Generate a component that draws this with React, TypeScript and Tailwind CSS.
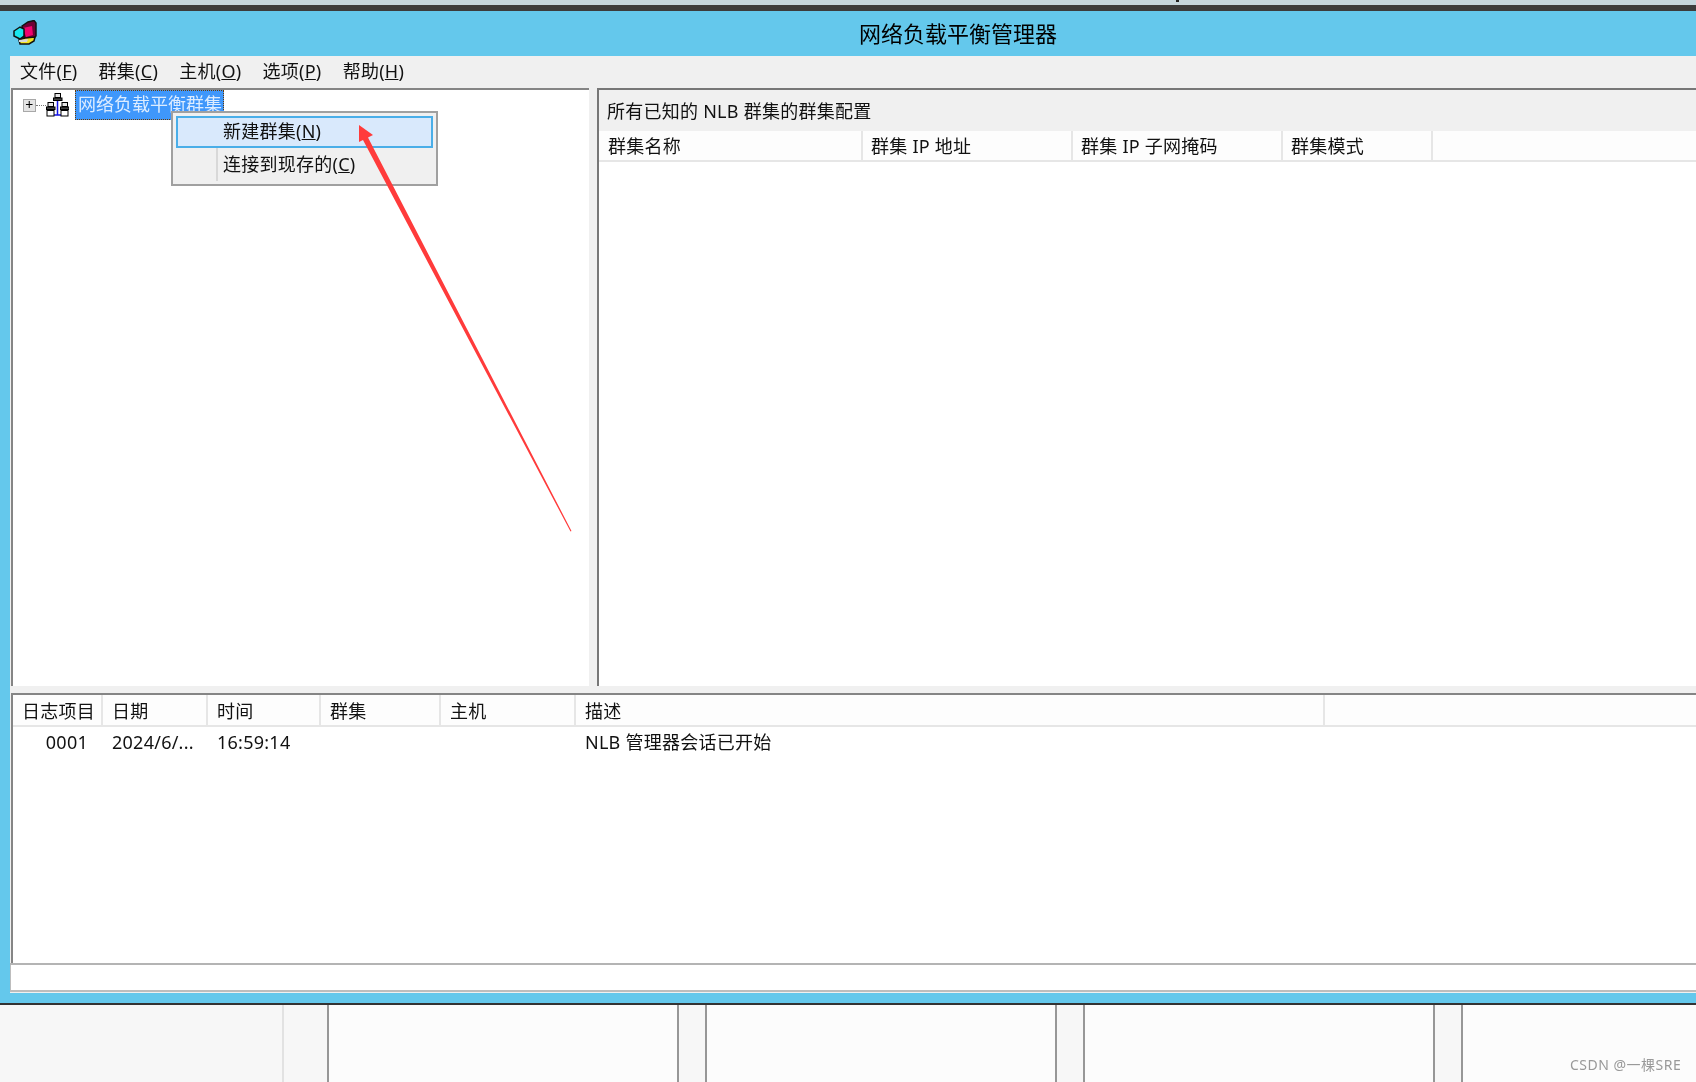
import React from 'react';

const clusterColumns = [
  { label: '群集名称', width: 'w-[264px]' },
  { label: '群集 IP 地址', width: 'w-[210px]' },
  { label: '群集 IP 子网掩码', width: 'w-[210px]' },
  { label: '群集模式', width: 'w-[150px]' },
];

const logColumns = [
  { label: '日志项目', width: 'w-[90px]' },
  { label: '日期', width: 'w-[105px]' },
  { label: '时间', width: 'w-[113px]' },
  { label: '群集', width: 'w-[120px]' },
  { label: '主机', width: 'w-[135px]' },
  { label: '描述', width: 'w-[749px]' },
];

const menus = [
  ['文件', 'F'],
  ['群集', 'C'],
  ['主机', 'O'],
  ['选项', 'P'],
  ['帮助', 'H'],
];

const taskSlots = [
  { width: 'w-[284px]', bg: 'bg-[#f7f7f7]', border: 'border-r-2 border-[#e2e2e2]' },
  { width: 'w-[45px]', bg: 'bg-[#f7f7f7]', border: 'border-r-2 border-[#979797]' },
  { width: 'w-[350px]', bg: 'bg-[#fcfcfc]', border: 'border-r-2 border-[#979797]' },
  { width: 'w-[28px]', bg: 'bg-[#f7f7f7]', border: 'border-r-2 border-[#979797]' },
  { width: 'w-[350px]', bg: 'bg-[#fcfcfc]', border: 'border-r-2 border-[#979797]' },
  { width: 'w-[28px]', bg: 'bg-[#f7f7f7]', border: 'border-r-2 border-[#979797]' },
  { width: 'w-[350px]', bg: 'bg-[#fcfcfc]', border: 'border-r-2 border-[#979797]' },
  { width: 'w-[28px]', bg: 'bg-[#f7f7f7]', border: 'border-r-2 border-[#979797]' },
  { width: 'flex-1', bg: 'bg-[#fcfcfc]', border: '' },
];

function AppIcon() {
  return (
    <svg width="24" height="25" viewBox="0 0 24 25" className="shrink-0">
      <path d="M9 6 L15 2 L21 0.5 L23 3 L23 16 L19 20 L11 18 Z" fill="#6e0034" stroke="#111" strokeWidth="1.5" />
      <path d="M10 8 L19 6 L20 15 L13 17 Z" fill="#f0046e" />
      <path d="M1 11 L7 7 L11 9 L11 16 L7 19 L1 16 Z" fill="#19e6ee" stroke="#111" strokeWidth="1.5" />
      <path d="M6 20 L12 18 L22 17 L21 21 L16 24 L7 24 Z" fill="#f2e224" stroke="#111" strokeWidth="1.5" />
      <path d="M6 20 L15 19 L14 22 L6 22 Z" fill="#d8d8d8" />
    </svg>
  );
}

function Computer({ x, y }: { x: number; y: number }) {
  return (
    <g transform={`translate(${x} ${y})`}>
      <rect x="2" y="0.5" width="5.5" height="4" fill="#e8e8e8" stroke="#000" />
      <rect x="0.5" y="5" width="8.5" height="2.5" fill="#444" stroke="#000" />
    </g>
  );
}

function NetworkIcon() {
  return (
    <svg width="23" height="24" viewBox="0 0 23 24" className="shrink-0">
      <path d="M11.5 8 V22 M7 22 H16" stroke="#1414e6" strokeWidth="1.5" fill="none" />
      <Computer x={7} y={0} />
      <Computer x={0} y={9} />
      <rect x="1" y="17.5" width="7" height="5.5" fill="#fff" stroke="#000" />
      <Computer x={14} y={9} />
      <rect x="15" y="17.5" width="7" height="5.5" fill="#fff" stroke="#000" />
    </svg>
  );
}

export default function App() {
  return (
    <div
      className="relative w-[1696px] h-[1082px] overflow-hidden flex flex-col bg-white text-[18px] tracking-[0.25px] text-[#111] blur-[0.4px]"
      style={{ fontFamily: '"Noto Sans", "Noto Sans CJK SC", sans-serif' }}
    >
      <div className="h-[5px] bg-[#c5d6dd] shrink-0" />
      <div className="h-[6px] bg-[#3c3c3c] shrink-0" />

      <div className="flex-1 flex flex-col bg-[#64c8ec] min-h-0">
        <div className="h-[45px] shrink-0 flex items-center pl-[13px] pb-[2px]">
          <AppIcon />
          <span className="ml-[822px] text-[22px] leading-none tracking-normal text-black whitespace-nowrap">网络负载平衡管理器</span>
        </div>

        <div className="ml-[10px] flex-1 flex flex-col min-h-0 bg-[#f0f0f0]">
          <div className="h-[32px] shrink-0 flex items-center pl-[10px] pb-[2px] gap-[21.2px] whitespace-nowrap">
            {menus.map(([name, key]) => (
              <span key={key}>
                {name}(<span className="underline">{key}</span>)
              </span>
            ))}
          </div>

          <div className="h-[598px] shrink-0 flex">
            <div className="w-[578px] ml-[1px] border-l-2 border-t-2 border-[#858585] bg-white">
              <div className="flex items-center h-[30px]">
                <span className="ml-[10px] w-[13px] h-[13px] border border-[#a8a8a8] bg-[#e4e4e4] flex items-center justify-center text-[14px] leading-none text-black">+</span>
                <span className="w-[10px] border-t border-dotted border-[#777]" />
                <NetworkIcon />
                <span className="ml-[6px] w-[149px] h-[30px] flex items-center pl-[2px] pb-[2px] tracking-normal bg-[#3f97fb] border border-dotted border-[#6b3a00] text-[#dcecff] whitespace-nowrap">
                  网络负载平衡群集
                </span>
              </div>
            </div>
            <div className="w-[8px]" />
            <div className="flex-1 flex flex-col border-l-2 border-t-2 border-[#777] bg-white">
              <div className="h-[41px] shrink-0 bg-[#f0f0f0] flex items-center pl-[8px] pt-[2px] whitespace-nowrap">所有已知的 NLB 群集的群集配置</div>
              <div className="h-[31px] shrink-0 flex bg-[#fdfdfd] border-b-2 border-[#e6e6e6]">
                {clusterColumns.map((col, index) => (
                  <div key={col.label} className={`${col.width} ${index === 0 ? 'pl-[9px]' : 'pl-[8px]'} pt-[2px] flex items-center border-r-2 border-[#e6e6e6] whitespace-nowrap`}>
                    {col.label}
                  </div>
                ))}
              </div>
            </div>
          </div>

          <div className="h-[7px] shrink-0" />

          <div className="h-[270px] shrink-0 ml-[1px] flex flex-col border-l-2 border-t-2 border-[#858585] bg-white">
            <div className="h-[32px] shrink-0 flex bg-[#fdfdfd] border-b-2 border-[#e6e6e6]">
              {logColumns.map((col) => (
                <div key={col.label} className={`${col.width} pl-[9px] pt-[2px] flex items-center border-r-2 border-[#e6e6e6] whitespace-nowrap`}>
                  {col.label}
                </div>
              ))}
            </div>
            <div className="flex h-[30px] items-center whitespace-nowrap">
              <div className="w-[75px] text-right">0001</div>
              <div className="w-[24px]" />
              <div className="w-[105px]">2024/6/...</div>
              <div className="w-[368px]">16:59:14</div>
              <div>NLB 管理器会话已开始</div>
            </div>
          </div>

          <div className="h-[2px] shrink-0 bg-[#b4b4b4]" />
          <div className="h-[27px] shrink-0 bg-white border-l border-b-2 border-[#bdbdbd]" />
        </div>

        <div className="h-[10px] shrink-0" />
      </div>

      <div className="h-[2px] bg-[#333] shrink-0" />
      <div className="h-[77px] shrink-0 flex">
        {taskSlots.map((slot, index) => (
          <div key={index} className={`${slot.width} ${slot.bg} ${slot.border}`} />
        ))}
      </div>

      {/* context menu over the tree */}
      <div className="absolute left-[171px] top-[111px] w-[267px] h-[75px] border-2 border-[#a0a0a0] bg-[#f0f0f0] p-[3px] flex flex-col">
        <div className="h-[32px] shrink-0 bg-[#d9e9fc] border-2 border-[#4aaee8] flex items-center pl-[45px] pb-[2px] whitespace-nowrap">
          新建群集(<span className="underline">N</span>)
        </div>
        <div className="flex-1 flex items-center">
          <div className="ml-[40px] w-[2px] self-stretch bg-[#d8d8d8]" />
          <span className="ml-[5px] whitespace-nowrap">连接到现存的(<span className="underline">C</span>)</span>
        </div>
      </div>

      {/* red annotation arrow */}
      <svg className="absolute left-0 top-0 pointer-events-none" width="1696" height="1082" viewBox="0 0 1696 1082">
        <path d="M359 125 L373 135 L368 137.5 L571.5 531 L570.5 531.5 L363 140 L359 142 Z" fill="#ff3b3b" />
      </svg>

      <div className="absolute left-[1176px] top-0 w-[3px] h-[2px] bg-[#222]" />
      <div className="absolute left-[1570px] top-[1058px] text-[14px] leading-none tracking-[0.5px] text-[#999] whitespace-nowrap">CSDN @一棵SRE</div>
    </div>
  );
}
